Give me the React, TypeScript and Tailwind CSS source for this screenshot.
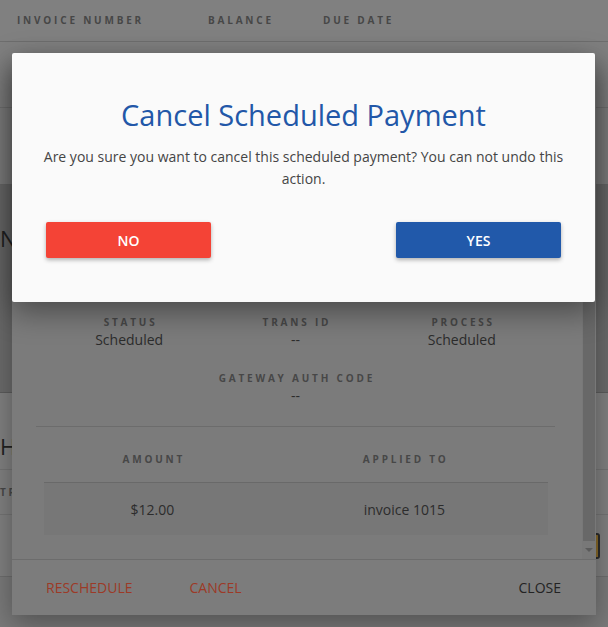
import React from "react";

const label = "text-[10px] font-bold tracking-[0.28em] uppercase text-[#474747]";

function PageBehind() {
  return (
    <div className="w-full h-[627px] bg-[#808080] overflow-hidden">
      {/* invoice table header */}
      <div className="h-[42px] border-b border-[#6e6e6e] flex items-center pl-[17px]">
        <span className={`${label} w-[191px] text-[#404040]`}>Invoice Number</span>
        <span className={`${label} w-[115px] text-[#404040]`}>Balance</span>
        <span className={`${label} text-[#404040]`}>Due Date</span>
      </div>
      <div className="h-[66px] border-b border-[#727272]" />
      <div className="h-[77px] border-b border-[#6a6a6a]" />
      <div className="h-[208px] bg-[#6b6b6b] border-b border-[#5c5c5c] pt-[42px]">
        <span className="text-[22px] font-normal text-[#222222] leading-none">N</span>
      </div>
      <div className="h-[77px] border-b border-[#747474] pt-[42px]">
        <span className="text-[22px] font-normal text-[#222222] leading-none">H</span>
      </div>
      <div className="h-[45px] border-b border-[#747474] flex items-center">
        <span className={`${label} text-[#3c3c3c]`}>Tr</span>
      </div>
      <div className="h-[62px] border-b border-[#6e6e6e] flex items-center justify-end pr-[8px]">
        <div className="w-[6px] h-[26px] border-2 border-l-0 border-[#2b2b2b] rounded-r-[3px] bg-[#8a6a2a]" />
      </div>
      <div className="h-[50px] bg-[#7a7a7a]" />
    </div>
  );
}

function PaymentDialog() {
  return (
    <div className="absolute left-[12px] right-[12px] top-[60px] bottom-[12px] bg-[#7b7b7b] shadow-[0_8px_28px_rgba(0,0,0,0.35)] flex flex-col rounded-[2px]">
      <div className="flex-1 flex overflow-hidden">
        <div className="flex-1 pl-[24px] pr-[27px] pt-[255px]">
          <div className="grid grid-cols-3 px-[10px] text-center">
            {[
              ["Status", "Scheduled"],
              ["Trans ID", "--"],
              ["Process", "Scheduled"],
            ].map(([k, v]) => (
              <div key={k} className="flex flex-col items-center">
                <span className={`${label} leading-[14px] pl-[0.28em]`}>{k}</span>
                <span className="text-[14px] leading-[20px] text-[#2c2c2c] mt-[1px]">{v}</span>
              </div>
            ))}
          </div>
          <div className="flex flex-col items-center mt-[21px]">
            <span className={`${label} leading-[14px] pl-[0.28em]`}>Gateway Auth Code</span>
            <span className="text-[14px] leading-[20px] text-[#2c2c2c] mt-[1px]">--</span>
          </div>
          <div className="mt-[20px] border-t border-[#6c6c6c]" />
          <div className="mt-[9px] ml-[8px] mr-[7px]">
            <div className="h-[47px] flex items-center border-b border-[#696969] text-center">
              <span className={`${label} w-[43%] pl-[0.28em]`}>Amount</span>
              <span className={`${label} flex-1 pl-[0.28em]`}>Applied To</span>
            </div>
            <div className="h-[52px] flex items-center bg-[#777777] text-center text-[14px] text-[#2c2c2c]">
              <span className="w-[43%]">$12.00</span>
              <span className="flex-1">invoice 1015</span>
            </div>
          </div>
        </div>
        {/* scrollbar */}
        <div className="w-[14px] bg-[#787878] flex flex-col">
          <div className="flex-1 mx-[1px] bg-[#686868]" />
          <div className="h-[18px] flex items-center justify-center">
            <div className="w-0 h-0 border-l-[4px] border-r-[4px] border-t-[4px] border-l-transparent border-r-transparent border-t-[#5a5a5a]" />
          </div>
        </div>
      </div>
      <div className="h-[56px] border-t border-[#6c6c6c] bg-[#7c7c7c] flex items-center pl-[34px] pr-[35px] text-[14px]">
        <span className="text-[#9c3a27]">RESCHEDULE</span>
        <span className="text-[#9c3a27] ml-[57px]">CANCEL</span>
        <span className="ml-auto text-[#232323]">CLOSE</span>
      </div>
    </div>
  );
}

function ConfirmDialog() {
  return (
    <div className="absolute left-[12px] right-[13px] top-[53px] h-[249px] bg-[#fafafa] rounded-[2px] shadow-[0_10px_30px_rgba(0,0,0,0.4)] flex flex-col items-center px-[24px]">
      <h2 className="mt-[42px] text-[29px] leading-[40px] text-[#2257a8] font-normal">Cancel Scheduled Payment</h2>
      <p className="mt-[11px] text-[14px] leading-[22px] text-[#454545] text-center">
        Are you sure you want to cancel this scheduled payment? You can not undo this action.
      </p>
      <div className="mt-[32px] w-full flex justify-between px-[10px]">
        <button className="w-[165px] h-[36px] bg-[#f44336] text-white text-[14px] font-semibold rounded-[2px] shadow-[0_2px_4px_rgba(0,0,0,0.3)]">
          NO
        </button>
        <button className="w-[165px] h-[36px] bg-[#2159aa] text-white text-[14px] font-semibold rounded-[2px] shadow-[0_2px_4px_rgba(0,0,0,0.3)]">
          YES
        </button>
      </div>
    </div>
  );
}

export default function App() {
  return (
    <div className="relative w-[608px] h-[627px] overflow-hidden font-['Open_Sans',sans-serif]">
      <PageBehind />
      <PaymentDialog />
      <ConfirmDialog />
    </div>
  );
}
